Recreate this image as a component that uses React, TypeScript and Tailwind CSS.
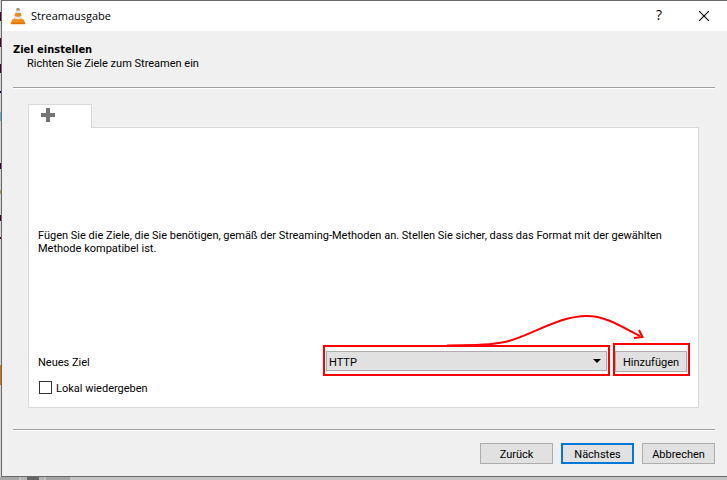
import type { ReactNode } from "react";

function ConeIcon() {
  return (
    <svg viewBox="0 0 16 18" className="h-[18px] w-4" aria-hidden="true">
      <path d="M2.600 12h10.800l1.800 4.200H.800z" fill="#f58a10" />
      <path d="M.800 15.600h14.400v1.600H.800z" fill="#e07208" />
      <path d="M6.800 1h2.400l3.400 12c-1.600 1.800-7.600 1.800-9.200 0z" fill="#e2e6e8" />
      <path d="M6.800 1h2.400l.8 2.600H6z" fill="#b98a5c" />
      <path d="M5.300 6h5.400l.8 3c-1.500.9-5.500.9-7 0z" fill="#ec8a28" />
      <path d="M3.800 11.600c2 1 6.400 1 8.400 0l.4 1.600c-1.600 1.700-7.600 1.700-9.200 0z" fill="#f58a14" />
    </svg>
  );
}

function Divider() {
  return <hr className="h-[2px] border-0 border-t border-b border-t-[#a0a0a0] border-b-white" />;
}

function PushButton({ children, primary = false }: { children: ReactNode; primary?: boolean }) {
  return (
    <button
      type="button"
      className={
        primary
          ? "h-[21px] w-[73px] border-2 border-[#0078d7] bg-[#e1e1e1] pt-[2px] text-center"
          : "h-[21px] w-[73px] border border-[#adadad] bg-[#e1e1e1] pt-[2px] text-center"
      }
    >
      {children}
    </button>
  );
}

function TitleBar() {
  return (
    <header className="flex h-[30px] items-center bg-white pr-[18px] pl-2 font-['Open_Sans','Noto_Sans',sans-serif]">
      <ConeIcon />
      <h1 className="ml-[5px] flex-1 pb-[2px]">Streamausgabe</h1>
      <button type="button" aria-label="Hilfe" className="mr-[34px] w-3 pb-[2px] text-center text-[14px] leading-5">
        ?
      </button>
      <button type="button" aria-label="Schließen">
        <svg viewBox="0 0 10 10" className="size-[10px]" fill="none" stroke="#000" strokeWidth="1.1">
          <path d="M0 0l10 10M10 0L0 10" />
        </svg>
      </button>
    </header>
  );
}

function DesktopEdge() {
  return (
    <div className="flex w-px shrink-0 flex-col bg-[#d4d4d4]" aria-hidden="true">
      <div className="h-3" />
      <div className="h-[9px] bg-[#4a0030]" />
      <div className="h-[17px]" />
      <div className="h-[9px] bg-[#4a0030]" />
      <div className="h-[17px]" />
      <div className="h-[9px] bg-[#4a0030]" />
      <div className="h-[18px]" />
      <div className="h-[2px] bg-[#000060]" />
      <div className="h-[19px]" />
      <div className="h-[9px] bg-[#5fb4de]" />
      <div className="h-[42px]" />
      <div className="h-[6px] bg-[#4a0040]" />
      <div className="h-[21px]" />
      <div className="h-1 bg-[#b89a40]" />
      <div className="h-[21px]" />
      <div className="h-[6px] bg-[#4a0030]" />
      <div className="h-4" />
      <div className="h-[2px] bg-[#4a0030]" />
      <div className="h-[126px]" />
      <div className="h-5 bg-[#e07000]" />
    </div>
  );
}

export default function App() {
  return (
    <div className="flex min-h-screen flex-col bg-[#c4c4c4] font-[Roboto,'Liberation_Sans',sans-serif] text-[11px] leading-[13px] text-black">
      <div className="flex flex-1">
        <DesktopEdge />
        <main className="flex flex-1 flex-col border-t border-b border-l border-[#696969] bg-[#f0f0f0]">
          <TitleBar />
          <div className="flex flex-1 flex-col pr-3 pb-3 pl-[11px]">
            <div className="pt-3 pb-[17px]">
              <h2 className="font-['DejaVu_Sans_Condensed','DejaVu_Sans',sans-serif] font-bold">Ziel einstellen</h2>
              <p className="mt-px pl-[14px]">Richten Sie Ziele zum Streamen ein</p>
            </div>
            <Divider />

            <div className="flex flex-1 flex-col pt-[15px] pr-4 pb-[21px] pl-[15px]">
              <button
                type="button"
                aria-label="Neuer Tab"
                className="z-10 -mb-px flex h-6 w-16 items-start border border-b-0 border-[#d9d9d9] bg-white pt-[3px] pl-3"
              >
                <svg viewBox="0 0 14 14" className="size-[14px]" fill="#757575">
                  <path d="M5 0h4v5h5v4H9v5H5V9H0V5h5z" />
                </svg>
              </button>
              <section className="relative flex flex-1 flex-col border border-[#d9d9d9] bg-white pt-[13px] pr-2 pb-3 pl-[9px]">
                <p className="flex flex-1 items-center pr-6">
                  Fügen Sie die Ziele, die Sie benötigen, gemäß der Streaming-Methoden an. Stellen Sie sicher, dass das
                  Format mit der gewählten Methode kompatibel ist.
                </p>
                <div className="flex items-end">
                  <label htmlFor="ziel" className="flex-1 pb-[7px]">
                    Neues Ziel
                  </label>
                  <div className="relative h-[31px] w-[287px] border-2 border-[#f00] px-px pt-1">
                    <select
                      id="ziel"
                      className="block h-5 w-full appearance-none border border-[#adadad] bg-[#e1e1e1] pt-[2px] pl-[2px]"
                    >
                      <option>HTTP</option>
                    </select>
                    <svg
                      viewBox="0 0 8 4"
                      className="pointer-events-none absolute top-3 right-[7px] h-1 w-2"
                      aria-hidden="true"
                    >
                      <path d="M0 0h8L4 4z" />
                    </svg>
                  </div>
                  <div className="ml-[3px] h-[33px] w-[77px] border-2 border-[#f00] pt-[6px]">
                    <button
                      type="button"
                      className="block h-[21px] w-[72px] border border-[#adadad] bg-[#e1e1e1] pt-[2px] text-center"
                    >
                      Hinzufügen
                    </button>
                  </div>
                </div>
                <label className="mt-1 flex items-center gap-1">
                  <input type="checkbox" className="ml-px size-[13px] appearance-none border border-[#333] bg-white" />
                  <span className="pt-[2px]">Lokal wiedergeben</span>
                </label>
                <svg
                  viewBox="0 0 200 36"
                  className="pointer-events-none absolute right-[52px] bottom-[59px] h-9 w-[200px]"
                  fill="none"
                  stroke="#f00"
                  strokeWidth="2"
                  aria-hidden="true"
                >
                  <path d="M1 33.500C14 32.500 41 35 63 29C88 22 113 4 141 4C161 4 177 16 194 24" />
                  <path d="M193 18L196.500 25L188 26" />
                </svg>
              </section>
            </div>

            <Divider />
            <footer className="flex justify-end gap-2 pt-3">
              <PushButton>Zurück</PushButton>
              <PushButton primary>Nächstes</PushButton>
              <PushButton>Abbrechen</PushButton>
            </footer>
          </div>
        </main>
      </div>
      <div className="flex h-[3px] gap-[2px]" aria-hidden="true">
        <div className="w-[19px] bg-[#a8a8a8]" />
        <div className="flex w-[23px] justify-center bg-[#b4b4b4]">
          <div className="w-3 bg-[#666]" />
        </div>
        <div className="w-6 bg-[#a4a4a4]" />
      </div>
    </div>
  );
}
